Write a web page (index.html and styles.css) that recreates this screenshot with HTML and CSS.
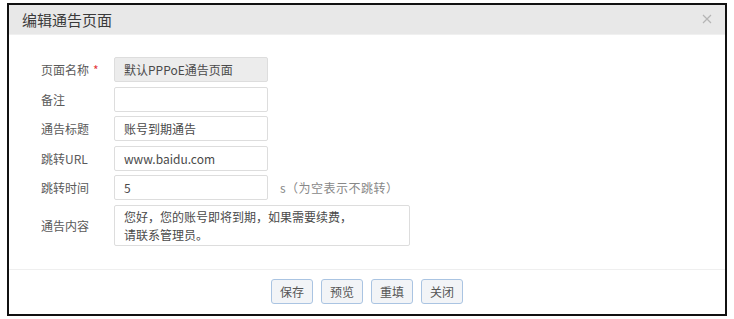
FILE: index.html
```html
<!DOCTYPE html>
<html lang="zh-CN">
<head>
    <meta charset="UTF-8">
    <title>编辑通告页面</title>
    <link rel="stylesheet" href="styles.css">
</head>
<body>
    <div class="dialog">
        <div class="dialog-header">
            <span class="dialog-title">编辑通告页面</span>
            <span class="close-btn">
                <svg width="10" height="10" viewBox="0 0 10 10"><path d="M1 1 L9 9 M9 1 L1 9" stroke="#b5b5b5" stroke-width="1.2" fill="none"/></svg>
            </span>
        </div>

        <div class="dialog-body">
            <div class="form-row">
                <label>页面名称<span class="required">*</span></label>
                <input type="text" class="input disabled" value="默认PPPoE通告页面" disabled>
            </div>
            <div class="form-row">
                <label>备注</label>
                <input type="text" class="input" value="">
            </div>
            <div class="form-row">
                <label>通告标题</label>
                <input type="text" class="input" value="账号到期通告">
            </div>
            <div class="form-row">
                <label>跳转URL</label>
                <input type="text" class="input" value="www.baidu.com">
            </div>
            <div class="form-row">
                <label>跳转时间</label>
                <input type="text" class="input" value="5">
                <span class="hint">s（为空表示不跳转）</span>
            </div>
            <div class="form-row">
                <label>通告内容</label>
                <textarea class="textarea">您好，您的账号即将到期，如果需要续费，
请联系管理员。</textarea>
            </div>
        </div>

        <div class="dialog-footer">
            <button class="btn">保存</button>
            <button class="btn">预览</button>
            <button class="btn">重填</button>
            <button class="btn">关闭</button>
        </div>
    </div>
</body>
</html>
```

FILE: styles.css
```css
body {
    margin: 0;
    padding: 3px 0 0 7px;
    font-family: "Noto Sans CJK SC", "Noto Sans", sans-serif;
    background: #fff;
}

.dialog {
    width: 720px;
    height: 313px;
    box-sizing: border-box;
    border: 2px solid #111;
    display: flex;
    flex-direction: column;
    background: #fff;
}

.dialog-header {
    height: 29px;
    background: #e8e8e8;
    border-bottom: 1px solid #f0f0f0;
    display: flex;
    align-items: center;
    justify-content: space-between;
    padding: 0 13px 0 13px;
}

.dialog-title {
    font-size: 15px;
    color: #3a3a3a;
    line-height: 1;
}

.close-btn {
    display: flex;
    margin-top: -2px;
}

.dialog-body {
    flex: 1;
    padding: 22px 32px 0 32px;
    display: flex;
    flex-direction: column;
    gap: 4.5px;
}

.form-row {
    display: flex;
    align-items: center;
}

.form-row label {
    width: 73px;
    font-size: 12px;
    color: #5a5a5a;
}

.required {
    color: #e4393c;
    margin-left: 4px;
}

.input {
    width: 154px;
    height: 25px;
    box-sizing: border-box;
    border: 1px solid #ddd;
    border-radius: 2px;
    padding: 0 9px;
    font-family: inherit;
    font-size: 12px;
    color: #4a4a4a;
    background: #fff;
}

.input.disabled {
    background: #ececec;
    color: #4a4a4a;
}

.hint {
    margin-left: 12px;
    font-size: 12px;
    color: #888;
    letter-spacing: 0.5px;
    text-spacing-trim: space-all;
}

.textarea {
    width: 296px;
    height: 41px;
    box-sizing: border-box;
    border: 1px solid #ddd;
    border-radius: 2px;
    padding: 2px 9px 1px;
    font-family: inherit;
    font-size: 12px;
    line-height: 18px;
    color: #4a4a4a;
    resize: none;
    overflow: hidden;
    text-spacing-trim: space-all;
}

.dialog-footer {
    border-top: 1px solid #efefef;
    margin-top: 22px;
    height: 45px;
    display: flex;
    justify-content: center;
    gap: 8px;
    padding-top: 9px;
    box-sizing: border-box;
}

.btn {
    height: 25px;
    padding: 0 8px;
    font-family: inherit;
    font-size: 12px;
    color: #555;
    background: #f2f4f7;
    border: 1px solid #aac4e2;
    border-radius: 3px;
}
```
